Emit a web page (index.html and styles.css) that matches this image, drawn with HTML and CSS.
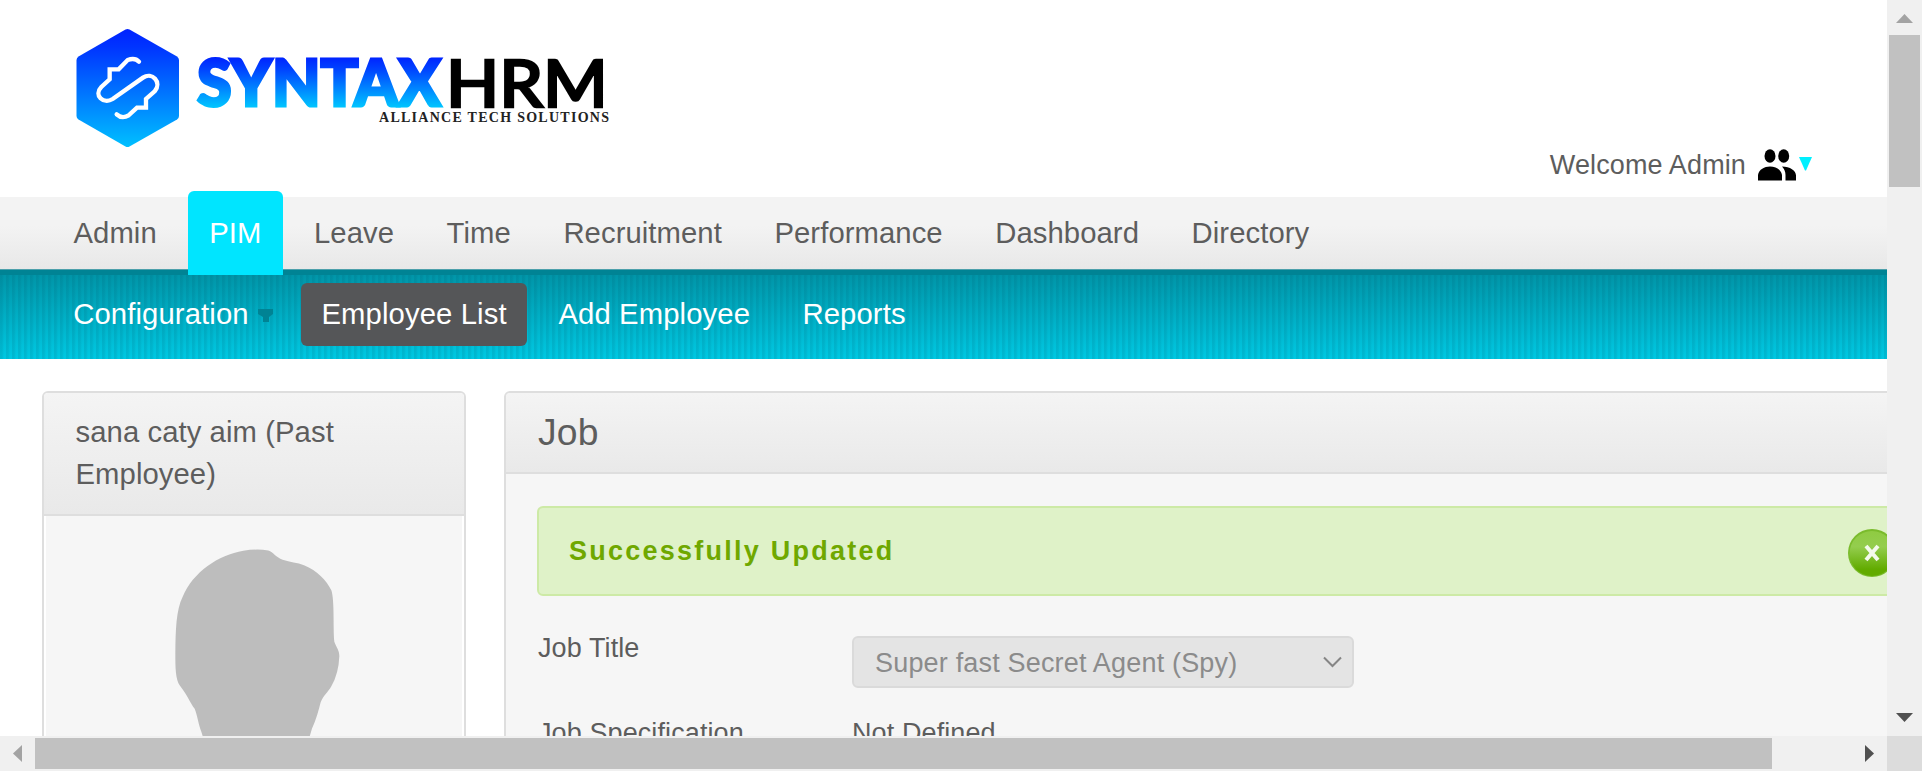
FILE: index.html
```html
<!DOCTYPE html>
<html lang="en">
<head>
<meta charset="utf-8">
<title>Syntax HRM</title>
<link rel="stylesheet" href="styles.css">
</head>
<body>
<div class="window">
  <div class="page">
    <header class="header">
      <svg class="logo" viewBox="0 0 560 130" width="560" height="130" role="img" aria-label="Syntax HRM">
        <defs>
          <linearGradient id="hex" x1="0" y1="0" x2="0" y2="1"><stop offset="0" stop-color="#0022ff"/><stop offset=".15" stop-color="#0034ff"/><stop offset="1" stop-color="#00c0ff"/></linearGradient>
          <linearGradient id="word" gradientUnits="userSpaceOnUse" x1="0" y1="37" x2="0" y2="87"><stop offset="0" stop-color="#0022ff"/><stop offset=".25" stop-color="#0044ff"/><stop offset="1" stop-color="#00c4ff"/></linearGradient>
        </defs>
        <path fill="url(#hex)" d="M49.500 9.500q2-1 4 0L101 36.500q2 1.500 2 3.500V96q0 2-2 3.500L53.500 126.500q-2 1-4 0L2.500 99.500q-2-1.500-2-3.500V40q0-2 2-3.500z"/>
        <path fill="none" stroke="#fff" stroke-width="13" stroke-linecap="round" transform="translate(-16 -10) scale(.3333)" d="M237 155Q225 142 203 150L176 178H149V208L124 231C100 256 130 284 158 267L249 203C276 185 307 216 284 244L258 267V293H231L206 316Q186 328 170 313"/>
        <text class="word" x="121" y="85.500" textLength="244" lengthAdjust="spacingAndGlyphs" fill="url(#word)" stroke="url(#word)">SYNTAX</text>
        <text class="hrm" x="370" y="86.500" textLength="162" lengthAdjust="spacingAndGlyphs">HRM</text>
        <text class="tagline" x="303" y="102" textLength="230" lengthAdjust="spacing">ALLIANCE TECH SOLUTIONS</text>
      </svg>
      <div class="user">
        <span>Welcome Admin</span>
        <svg class="people" viewBox="0 0 40 34" width="40" height="34"><ellipse cx="13" cy="8" rx="5.500" ry="6.800"/><ellipse cx="26.700" cy="8" rx="5.500" ry="6.800"/><path d="M1 32.500V27C3 15.500 23 15.500 25 27v5.500zM25 18.500c8 0 14 4 14 9v5H28.500V27c0-3.500-1.500-6.500-3.500-8.500z"/></svg>
        <svg class="caret" viewBox="0 0 13 14" width="13" height="14"><path fill="#00f0ff" d="M0 0h13L7 13.500H6z"/></svg>
      </div>
    </header>
    <nav class="menu">
      <a>Admin</a><a class="current">PIM</a><a>Leave</a><a>Time</a><a>Recruitment</a><a>Performance</a><a>Dashboard</a><a>Directory</a>
    </nav>
    <nav class="submenu">
      <a>Configuration<svg class="arrow" viewBox="0 0 15 14" width="15" height="14"><path fill="#008394" d="M0 0h15v5l-4 3v5H5V8L0 5z"/></svg></a><a class="selected">Employee List</a><a>Add Employee</a><a>Reports</a>
    </nav>
    <main class="content">
      <aside class="profile">
        <h1 class="profile-name">sana caty aim (Past Employee)</h1>
        <div class="photo">
          <svg viewBox="435 507 495 593" width="165" height="198"><path fill="#bdbdbd" d="M640 512Q680 505 715 511C730 516 738 532 758 539C780 546 802 548 822 555C862 570 890 602 904 630C914 660 909 740 913 785C919 802 928 810 928 828Q926 880 904 918C894 936 880 946 872 966C866 990 858 1020 846 1045L830 1100H528L514 1055C505 1032 502 1005 494 986C480 968 470 942 450 917C436 898 436 860 436 820C437 750 438 690 458 650C490 575 565 525 640 512z"/></svg>
        </div>
      </aside>
      <section class="job">
        <h2 class="job-title">Job</h2>
        <div class="job-body">
          <div class="message">Successfully Updated
            <svg class="close" viewBox="0 0 48 48" width="48" height="48"><defs><linearGradient id="btn" x1="0" y1="0" x2="0" y2="1"><stop offset="0" stop-color="#8fcb42"/><stop offset=".35" stop-color="#94cd4e"/><stop offset=".85" stop-color="#62ab00"/></linearGradient></defs><circle cx="24" cy="24" r="24" fill="#7abb2c"/><circle cx="24" cy="24.500" r="22.500" fill="url(#btn)"/><path stroke="#f4faec" stroke-width="4" fill="none" d="M18 17 30 31M30 17 18 31"/></svg>
          </div>
          <div class="row"><label>Job Title</label><div class="select">Super fast Secret Agent (Spy)<svg viewBox="0 0 19 12" width="19" height="12"><path fill="none" stroke="#858585" stroke-width="2" d="M1 1.500 9.500 10 18 1.500"/></svg></div></div>
          <div class="row spec"><label>Job Specification</label><span>Not Defined</span></div>
        </div>
      </section>
    </main>
  </div>
  <div class="vbar"><svg viewBox="0 0 17 9" width="17" height="9"><path fill="#a3a3a3" d="M0 9h17L8.500 0z"/></svg><div class="vthumb"></div><svg class="down" viewBox="0 0 17 9" width="17" height="9"><path fill="#505050" d="M0 0h17L8.500 9z"/></svg></div>
  <div class="hbar"><svg viewBox="0 0 9 17" width="9" height="17"><path fill="#a3a3a3" d="M9 0v17L0 8.500z"/></svg><div class="hthumb"></div><svg class="right" viewBox="0 0 9 17" width="9" height="17"><path fill="#505050" d="M0 0v17l9-8.500z"/></svg></div>
  <div class="corner"></div>
</div>
</body>
</html>
```
FILE: styles.css
```css
* { box-sizing: border-box; }
body { margin: 0; font-family: "Liberation Sans", Arial, sans-serif; font-size: 27px; letter-spacing: .12px; color: #5d5d5d; background: #fff; overflow: hidden; }
svg { display: block; flex: none; }
h1, h2 { margin: 0; font-weight: 400; }
.window { display: grid; grid-template: 736px 35px / 1887px 35px; width: 1922px; height: 771px; }
.page { overflow: hidden; min-width: 0; }

.header { height: 197px; padding: 20px 75px 0 76px; display: flex; justify-content: space-between; align-items: flex-start; }
.logo { letter-spacing: 0; }
.word { font: 900 64px Lato, sans-serif; stroke-width: 3px; }
.hrm { font: 500 65px Lato, sans-serif; fill: #000; stroke: #000; stroke-width: 2.500px; }
.tagline { font: 700 14px "Liberation Serif", serif; fill: #222; }
.user { display: flex; align-items: flex-start; padding-top: 128px; }
.user span { line-height: 34px; }
.people { margin-left: 11px; }
.caret { margin: 9px 0 0 2px; }

.menu { position: relative; z-index: 1; height: 72px; padding-left: 52px; display: flex; gap: 9.600px; background: linear-gradient(#f3f3f3 40%, #e8e8e8); }
.menu a { height: 72px; padding: 0 21.500px; font-size: 29.250px; line-height: 72px; letter-spacing: .07px; }
.menu .current { height: 84px; margin-top: -6px; padding-top: 6px; border-radius: 6px 6px 0 0; background: #00e5ff; color: #fff; letter-spacing: 0; }
.submenu { height: 90px; padding: 14px 0 0 52px; display: flex; gap: 10px; color: #fff; font-size: 29.250px; background: linear-gradient(#4da0ab 0 1px, #008394 1px 6px, transparent 6px), repeating-linear-gradient(90deg, rgba(0, 80, 100, .12) 0 2px, transparent 4px 6px), linear-gradient(#0095a8 6px, #00c8e2); }
.submenu a { display: flex; height: 63px; padding: 0 21.200px; line-height: 63px; border-radius: 6px; }
.submenu .selected { padding: 0 20.500px; background: #555658; }
.arrow { margin: 26px -3px 0 9px; }

.content { display: flex; align-items: flex-start; gap: 38px; padding: 32px 0 0 42px; }
.profile { width: 424px; height: 700px; flex: none; border: 2px solid #dedede; border-radius: 6px; background: #fff; overflow: hidden; }
.profile-name { height: 123px; padding: 18px 31.500px; font-size: 29.250px; letter-spacing: .08px; line-height: 42px; border-bottom: 2px solid #dedede; background: linear-gradient(#f4f4f4, #e9e9e9); }
.photo { height: 600px; margin: 0 2px; padding: 33px 0 0 129px; background: #f6f6f6; }
.job { width: 1600px; height: 700px; flex: none; border: 2px solid #dedede; border-radius: 6px; background: #f6f6f6; overflow: hidden; }
.job-title { height: 81px; padding-left: 32px; font-size: 37.300px; line-height: 79px; border-bottom: 2px solid #dedede; background: linear-gradient(#f4f4f4, #e9e9e9); }
.job-body { padding: 32px 31px; }
.message { display: flex; height: 90px; padding-left: 30px; border: 2px solid #cdeaa6; border-radius: 6px; background: #dff2c8; color: #6fa800; font-weight: 700; line-height: 86px; letter-spacing: 2.250px; }
.close { margin: 21px 0 0 953px; }
.row { display: flex; }
.row label { width: 315px; padding-left: 1px; }
.row > label, .row > span { line-height: 32px; letter-spacing: .1px; }
.row:not(.spec) { padding-top: 36px; }
.select { display: flex; justify-content: space-between; width: 502px; height: 52px; margin-top: 4px; padding: 0 10px 0 21px; line-height: 50px; letter-spacing: .18px; border: 2px solid #dadada; border-radius: 6px; background: #e4e4e4; color: #8b8b8b; }
.select svg { margin-top: 18px; }
.spec { padding-top: 29px; }

.vbar, .hbar { background: #f0f0f0; }
.vbar { display: flex; flex-direction: column; align-items: center; padding: 14px 0; }
.vthumb { width: 31px; height: 152px; margin-top: 12px; background: #c1c1c1; }
.down { margin-top: auto; }
.hbar { display: flex; align-items: center; padding: 0 13px; }
.hthumb { width: 1737px; height: 31px; margin-left: 13px; background: #c1c1c1; }
.right { margin-left: auto; }
.corner { background: #dcdcdc; }
```
